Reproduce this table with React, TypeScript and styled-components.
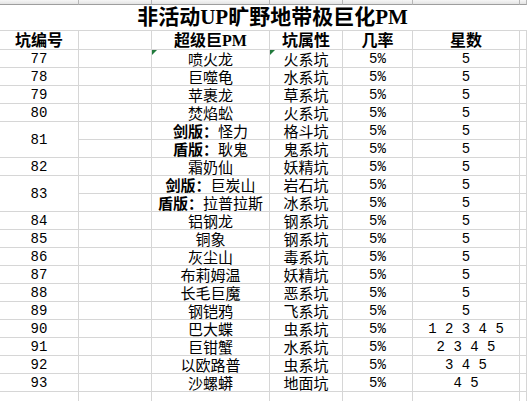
import React from 'react'
import styled, { createGlobalStyle, css } from 'styled-components'

const GlobalStyle = createGlobalStyle`
  html, body {
    margin: 0;
    padding: 0;
    background: #ffffff;
  }
  body {
    font-family: "Noto Sans CJK SC", sans-serif;
    overflow: hidden;
  }
`

const GRID = '#d6d6d6'
const CJK = '"Noto Sans CJK SC", sans-serif'
const MONO = '"Liberation Mono", "Noto Sans CJK SC", monospace'
const SERIF_BOLD = '"Liberation Serif", "Noto Sans CJK SC", serif'

const Sheet = styled.div`
  display: grid;
  grid-template-columns: 79px 73px 118px 73px 70px 107px 1fr;
  grid-template-rows: 5px 26px 19px;
  grid-auto-rows: 18px;
  width: 527px;
  height: 401px;
  overflow: hidden;
  color: #000;
`

const ColHead = styled.div`
  background: linear-gradient(#f6f6f6, #e4e4e4);
  border-right: 1px solid #b7b7b7;
  border-bottom: 1px solid #9e9e9e;
  box-sizing: border-box;
`

const Title = styled.div`
  grid-column: 1 / -1;
  display: flex;
  align-items: center;
  justify-content: center;
  padding-left: 18px;
  padding-bottom: 1px;
  border-bottom: 1px solid ${GRID};
  box-sizing: border-box;
  font-family: ${SERIF_BOLD};
  font-weight: 700;
  font-size: 21px;
  line-height: 24px;
  white-space: nowrap;
`

type CellProps = {
  $kind?: 'head' | 'cjk' | 'num'
  $span?: number
  $flag?: boolean
}

const Cell = styled.div<CellProps>`
  position: relative;
  display: flex;
  align-items: center;
  justify-content: center;
  padding-top: 1px;
  box-sizing: border-box;
  border-right: 1px solid ${GRID};
  border-bottom: 1px solid ${GRID};
  white-space: nowrap;
  font-size: 15px;
  line-height: 16px;
  font-family: ${CJK};
  ${p => p.$span && css`grid-row: span ${p.$span};`}
  ${p =>
    p.$kind === 'head' &&
    css`
      font-family: ${SERIF_BOLD};
      font-weight: 700;
      font-size: 16px;
    `}
  ${p =>
    p.$kind === 'num' &&
    css`
      font-family: ${MONO};
      font-size: 14px;
    `}
  ${p =>
    p.$flag &&
    css`
      &::before {
        content: '';
        position: absolute;
        top: 0;
        left: 0;
        border-top: 5px solid #217a3c;
        border-right: 5px solid transparent;
      }
    `}
`

const Tag = styled.b`
  font-weight: 700;
`

type Row = {
  no?: number
  span?: number
  name: React.ReactNode
  type: string
  stars: string
}

const dual = (label: string, name: string) => (
  <span>
    <Tag>{label}：</Tag>
    {name}
  </span>
)

const rows: Row[] = [
  { no: 77, name: '喷火龙', type: '火系坑', stars: '5' },
  { no: 78, name: '巨噬龟', type: '水系坑', stars: '5' },
  { no: 79, name: '苹裹龙', type: '草系坑', stars: '5' },
  { no: 80, name: '焚焰蚣', type: '火系坑', stars: '5' },
  { no: 81, span: 2, name: dual('剑版', '怪力'), type: '格斗坑', stars: '5' },
  { name: dual('盾版', '耿鬼'), type: '鬼系坑', stars: '5' },
  { no: 82, name: '霜奶仙', type: '妖精坑', stars: '5' },
  { no: 83, span: 2, name: dual('剑版', '巨炭山'), type: '岩石坑', stars: '5' },
  { name: dual('盾版', '拉普拉斯'), type: '冰系坑', stars: '5' },
  { no: 84, name: '铝钢龙', type: '钢系坑', stars: '5' },
  { no: 85, name: '铜象', type: '钢系坑', stars: '5' },
  { no: 86, name: '灰尘山', type: '毒系坑', stars: '5' },
  { no: 87, name: '布莉姆温', type: '妖精坑', stars: '5' },
  { no: 88, name: '长毛巨魔', type: '恶系坑', stars: '5' },
  { no: 89, name: '钢铠鸦', type: '飞系坑', stars: '5' },
  { no: 90, name: '巴大蝶', type: '虫系坑', stars: '1 2 3 4 5' },
  { no: 91, name: '巨钳蟹', type: '水系坑', stars: '2 3 4 5' },
  { no: 92, name: '以欧路普', type: '虫系坑', stars: '3 4 5' },
  { no: 93, name: '沙螺蟒', type: '地面坑', stars: '4 5' }
]

const heads = ['坑编号', '', '超级巨PM', '坑属性', '几率', '星数', '']

const App: React.FC = () => {
  return (
    <>
      <GlobalStyle />
      <Sheet>
        {heads.map((_, i) => (
          <ColHead key={`ch${i}`} />
        ))}
        <Title>非活动UP旷野地带极巨化PM</Title>
        {heads.map((h, i) => (
          <Cell key={`h${i}`} $kind="head">
            {h}
          </Cell>
        ))}
        {rows.map((r, i) => (
          <React.Fragment key={i}>
            {r.no !== undefined && (
              <Cell $kind="num" $span={r.span}>
                {r.no}
              </Cell>
            )}
            <Cell />
            <Cell $flag={i === 0}>{r.name}</Cell>
            <Cell $flag={i === 0}>{r.type}</Cell>
            <Cell $kind="num">5%</Cell>
            <Cell $kind="num">{r.stars}</Cell>
            <Cell />
          </React.Fragment>
        ))}
        {heads.map((_, i) => (
          <Cell key={`e${i}`} />
        ))}
      </Sheet>
    </>
  )
}

export default App
